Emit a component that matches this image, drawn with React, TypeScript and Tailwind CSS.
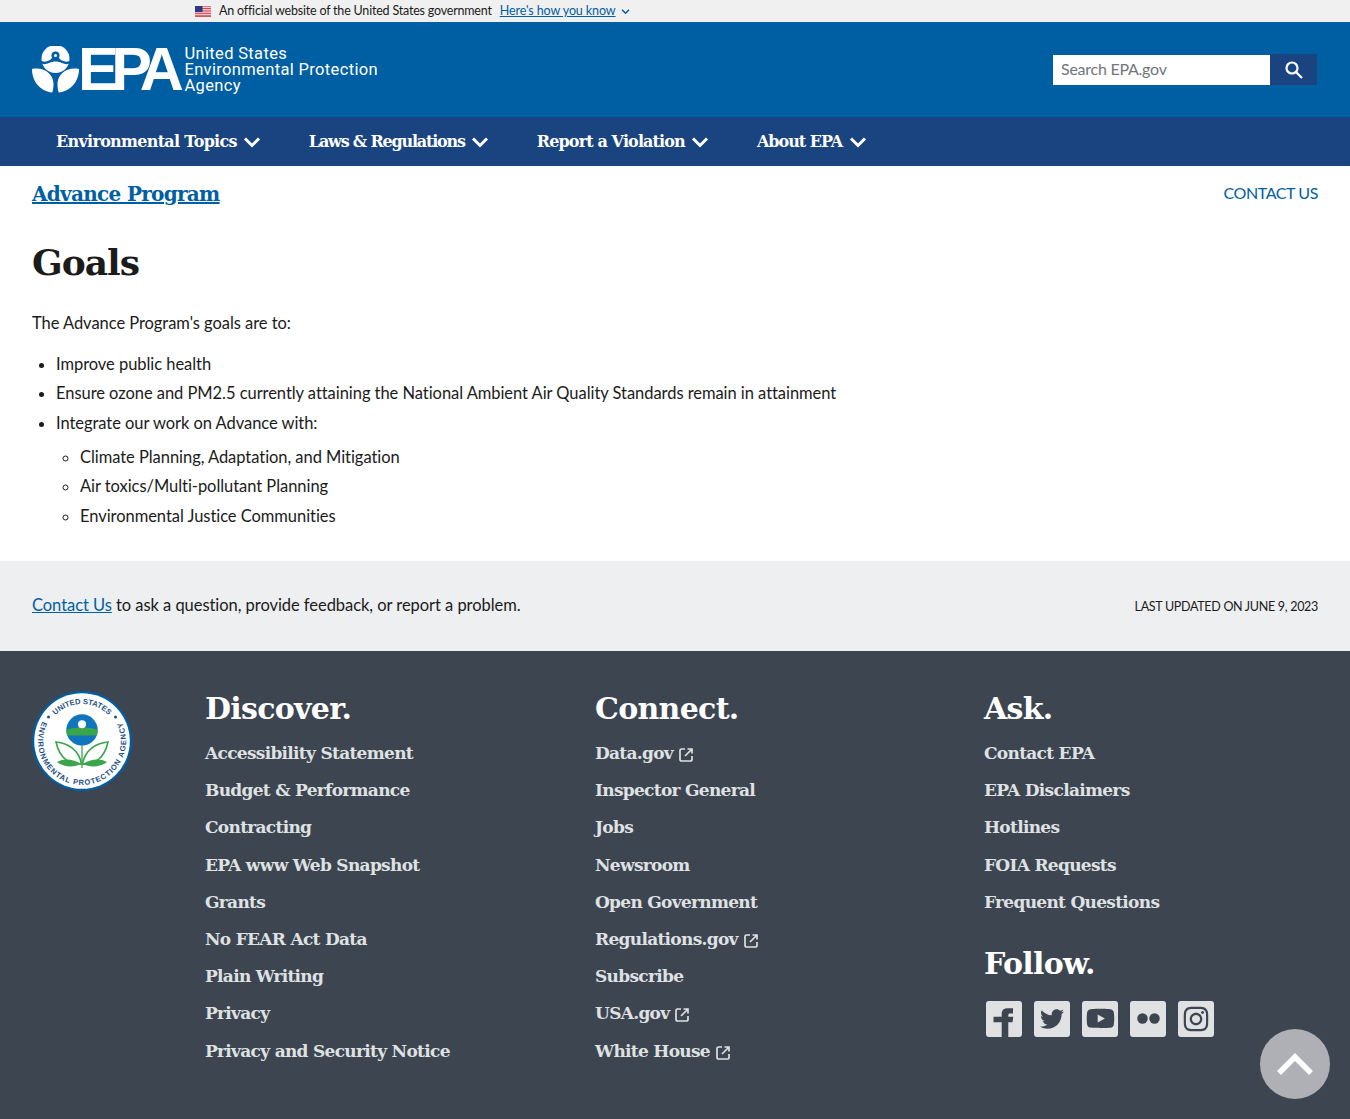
import { FaInstagram, FaTwitter, FaYoutube } from 'react-icons/fa';

const sans = "font-['Source_Sans_Pro','Lato','Noto_Sans',sans-serif]";
const serif = "font-['DejaVu_Serif',serif]";
const footerHeading = `text-[30px] leading-[36px] font-bold tracking-[-0.7px] text-white ${serif}`;

interface FooterLink {
  label: string;
  external?: boolean;
}

const discover: FooterLink[] = [
  { label: 'Accessibility Statement' },
  { label: 'Budget & Performance' },
  { label: 'Contracting' },
  { label: 'EPA www Web Snapshot' },
  { label: 'Grants' },
  { label: 'No FEAR Act Data' },
  { label: 'Plain Writing' },
  { label: 'Privacy' },
  { label: 'Privacy and Security Notice' },
];

const connect: FooterLink[] = [
  { label: 'Data.gov', external: true },
  { label: 'Inspector General' },
  { label: 'Jobs' },
  { label: 'Newsroom' },
  { label: 'Open Government' },
  { label: 'Regulations.gov', external: true },
  { label: 'Subscribe' },
  { label: 'USA.gov', external: true },
  { label: 'White House', external: true },
];

const ask: FooterLink[] = [
  { label: 'Contact EPA' },
  { label: 'EPA Disclaimers' },
  { label: 'Hotlines' },
  { label: 'FOIA Requests' },
  { label: 'Frequent Questions' },
];

const navItems = [
  { label: 'Environmental Topics', tracking: 'tracking-[-0.7px]' },
  { label: 'Laws & Regulations', tracking: 'tracking-[-1.2px]' },
  { label: 'Report a Violation', tracking: 'tracking-[-0.87px]' },
  { label: 'About EPA', tracking: 'tracking-[-1px]' },
];

function Flag() {
  return (
    <svg width="16" height="11" viewBox="0 0 16 11" className="shrink-0">
      <rect width="16" height="11" fill="#fff" />
      <path d="M0 .8h16M0 2.500h16M0 4.200h16M0 5.900h16M0 7.600h16M0 9.300h16M0 10.600h16" stroke="#c8313e" strokeWidth="0.9" />
      <rect width="7.500" height="6" fill="#2b3a7d" />
    </svg>
  );
}

function Chevron({ size = 18, width = 3 }: { size?: number; width?: number }) {
  return (
    <svg width={size} height={size} viewBox="0 0 18 18" fill="none" stroke="currentColor" strokeWidth={width}>
      <path d="M2 5.500 9 12.500 16 5.500" />
    </svg>
  );
}

function ExternalIcon() {
  return (
    <svg width="16" height="16" viewBox="0 0 16 16" fill="none" stroke="#dfe1e2" strokeWidth="1.700" className="ml-[5px] mt-[3px] shrink-0">
      <path d="M7 2H3.500A1.500 1.500 0 0 0 2 3.500v9A1.500 1.500 0 0 0 3.500 14h9a1.500 1.500 0 0 0 1.500-1.500V9" />
      <path d="M9.500 2H14v4.500M14 2 7 9" />
    </svg>
  );
}

function EpaMark() {
  return (
    <svg width="47" height="47" viewBox="0 0 47 47" className="shrink-0">
      <circle cx="23.500" cy="13" r="14" fill="#fff" />
      <circle cx="23.500" cy="9.500" r="4" fill="#005ea2" />
      <circle cx="23.500" cy="9.500" r="1.500" fill="#fff" />
      <path fill="#005ea2" d="M8 14.500c3 1.500 6 1.500 9 0 2-1 3-2.500 3.500-3h6c.5.500 1.500 2 3.500 3 3 1.500 6 1.500 9 0v2.500c-3 1.500-6 1.500-9 0-2.500-1-4-1.500-6.500-1.500s-4 .5-6.500 1.500c-3 1.500-6 1.500-9 0Z" />
      <path fill="#fff" d="M0 23c4-.8 8-.5 12 1 6 2.500 9.500 8 9.500 14 0 3-.4 6-1.200 8.500C9 45.500 0 36 0 23ZM47 23c-4-.8-8-.5-12 1-6 2.500-9.500 8-9.500 14 0 3 .4 6 1.200 8.500C38 45.500 47 36 47 23Z" />
    </svg>
  );
}

function Seal() {
  return (
    <svg width="100" height="100" viewBox="0 0 100 100" className="shrink-0">
      <defs>
        <path id="sealTop" d="M13 50a37 37 0 0 1 74 0" />
        <path id="sealBottom" d="M10.100 31.400A44 44 0 1 0 89.900 31.400" />
      </defs>
      <circle cx="50" cy="50" r="50" fill="#005ea2" />
      <circle cx="50" cy="50" r="47.800" fill="#fff" />
      <text fontSize="7.600" fontWeight="700" fill="#1d4f86" fontFamily="'Liberation Sans', sans-serif">
        <textPath href="#sealTop" startOffset="50%" textAnchor="middle">UNITED STATES</textPath>
      </text>
      <text fontSize="7.600" fontWeight="700" fill="#1d4f86" fontFamily="'Liberation Sans', sans-serif" letterSpacing="0.85">
        <textPath href="#sealBottom" startOffset="50%" textAnchor="middle">ENVIRONMENTAL PROTECTION AGENCY</textPath>
      </text>
      <circle cx="16.500" cy="26" r="1.500" fill="#1d4f86" />
      <circle cx="83.500" cy="26" r="1.500" fill="#1d4f86" />
      <circle cx="50" cy="39" r="15.700" fill="#0f75bc" />
      <path d="M34.300 39a15.700 15.700 0 0 0 1 5.500h29.400a15.700 15.700 0 0 0 1-5.500c-4-1.500-7-2.500-15.700-2.500s-11.700 1-15.700 2.500Z" fill="#3aa54a" />
      <circle cx="50" cy="33.300" r="4" fill="#fff" />
      <path d="M50 55v22" stroke="#3aa54a" strokeWidth="1.300" />
      <path d="M24 51c12 1 23 8 25.500 22-12 1-22-6-25.500-22Z" fill="none" stroke="#3aa54a" strokeWidth="1.600" />
      <path d="M76 51c-12 1-23 8-25.500 22 12 1 22-6 25.500-22Z" fill="none" stroke="#3aa54a" strokeWidth="1.600" />
      <path d="M25 71c7-4 17-3 24 2-7 4-18 3-24-2ZM75 71c-7-4-17-3-24 2 7 4 18 3 24-2Z" fill="#3aa54a" />
    </svg>
  );
}

function FooterList({ links }: { links: FooterLink[] }) {
  return (
    <ul className="flex flex-col gap-[12.200px]">
      {links.map((link) => (
        <li key={link.label} className={`flex h-[25px] items-center text-[17px] leading-[25px] font-bold tracking-[-0.7px] text-[#dfe1e2] ${serif}`}>
          {link.label}
          {link.external && <ExternalIcon />}
        </li>
      ))}
    </ul>
  );
}

function SocialIcon({ children }: { children: React.ReactNode }) {
  return (
    <div className="flex h-9 w-9 items-center justify-center overflow-hidden rounded-[3px] bg-[#dfe1e2] text-[#3d4551]">
      {children}
    </div>
  );
}

export default function App() {
  return (
    <div className={`relative min-h-[1119px] overflow-hidden bg-white text-[#1b1b1b] ${sans}`}>
      <div className="flex h-[22px] items-center bg-[#f0f0f0] pt-px pl-[195px] text-[12.500px]">
        <Flag />
        <span className="ml-2 tracking-[-0.2px]">An official website of the United States government</span>
        <span className="ml-2 tracking-[-0.1px] text-[#005ea2] underline">Here's how you know</span>
        <span className="ml-[5px] text-[#005ea2]">
          <Chevron size={9} width={3} />
        </span>
      </div>

      <header className="flex h-[95px] items-center justify-between bg-[#005ea2] pr-[33px] pl-8">
        <div className="flex items-center">
          <EpaMark />
          <span className="ml-[-1px] font-['Liberation_Sans',sans-serif] text-[61px] leading-none font-bold tracking-[-7.500px] text-white">EPA</span>
          <div className="ml-[8px] font-['Roboto',sans-serif] text-[16.500px] leading-[16px] tracking-[0.35px] text-white">
            <div>United States</div>
            <div>Environmental Protection</div>
            <div>Agency</div>
          </div>
        </div>
        <div className="flex h-[31px] items-end">
          <div className="flex h-[30px] w-[217px] items-center bg-white pb-[2px] pl-2 text-[16px] tracking-[-0.25px] text-[#71767a]">Search EPA.gov</div>
          <div className="flex h-[31px] w-[47px] items-center justify-center bg-[#1a4480]">
            <svg width="20" height="20" viewBox="0 0 20 20" fill="none" stroke="#fff" strokeWidth="2.200">
              <circle cx="8" cy="8" r="5.500" />
              <path d="m12 12 6 6" />
            </svg>
          </div>
        </div>
      </header>

      <nav className={`flex h-[49px] items-center gap-[47.500px] bg-[#1a4480] pl-14 text-[16px] font-bold text-white ${serif}`}>
        {navItems.map((item) => (
          <div key={item.label} className={`flex items-center gap-[6.500px] ${item.tracking}`}>
            {item.label}
            <Chevron size={18} width={3} />
          </div>
        ))}
      </nav>

      <main className="h-[395px] px-8">
        <div className="flex items-center justify-between pt-[13px]">
          <a className={`text-[20px] leading-[30px] font-bold tracking-[-0.7px] text-[#005ea2] underline ${serif}`}>Advance Program</a>
          <span className="-mt-[2px] text-[16px] tracking-[-0.4px] text-[#005ea2]">CONTACT US</span>
        </div>
        <h1 className={`mt-[27px] text-[36px] leading-[52px] font-bold tracking-[-1px] ${serif}`}>Goals</h1>
        <div className="mt-[21px] text-[16.500px] leading-[29.500px] tracking-[-0.05px]">
          <p>The Advance Program's goals are to:</p>
          <ul className="mt-[11px] list-disc pl-6">
            <li>Improve public health</li>
            <li>Ensure ozone and PM2.5 currently attaining the National Ambient Air Quality Standards remain in attainment</li>
            <li>
              Integrate our work on Advance with:
              <ul className="mt-[4.500px] list-[circle] pl-6">
                <li>Climate Planning, Adaptation, and Mitigation</li>
                <li>Air toxics/Multi-pollutant Planning</li>
                <li>Environmental Justice Communities</li>
              </ul>
            </li>
          </ul>
        </div>
      </main>

      <div className="flex h-[90px] items-center justify-between bg-[#edeff0] px-8">
        <p className="-mt-[2px] text-[16.500px] tracking-[-0.05px]">
          <a className="text-[#005ea2] underline">Contact Us</a> to ask a question, provide feedback, or report a problem.
        </p>
        <span className="mt-[2px] text-[12.500px] tracking-[-0.3px]">LAST UPDATED ON JUNE 9, 2023</span>
      </div>

      <footer className="flex h-[468px] bg-[#3d4551] pt-10 pl-8">
        <Seal />
        <div className="ml-[73px] grid flex-1 grid-cols-[390px_389px_1fr]">
          <div>
            <h2 className={footerHeading}>Discover.</h2>
            <div className="mt-[14px]">
              <FooterList links={discover} />
            </div>
          </div>
          <div>
            <h2 className={footerHeading}>Connect.</h2>
            <div className="mt-[14px]">
              <FooterList links={connect} />
            </div>
          </div>
          <div>
            <h2 className={footerHeading}>Ask.</h2>
            <div className="mt-[14px]">
              <FooterList links={ask} />
            </div>
            <h2 className={`mt-[31px] ${footerHeading}`}>Follow.</h2>
            <div className="mt-[19px] flex gap-3 pl-[2px]">
              <SocialIcon>
                <svg width="36" height="36" viewBox="0 0 36 36" fill="#3d4551">
                  <path d="M15.700 36V21.300H7.500V15.700H15.700V13C15.700 9 18 7.300 22 7.300H27V12.500H24C22.800 12.500 22.300 13 22.300 14.500V15.700H27.300L26.500 21.300H22.300V36Z" />
                </svg>
              </SocialIcon>
              <SocialIcon><FaTwitter size={24} /></SocialIcon>
              <SocialIcon><FaYoutube size={29} /></SocialIcon>
              <SocialIcon>
                <svg width="23" height="11" viewBox="0 0 23 11" fill="#3d4551">
                  <circle cx="5.500" cy="5.500" r="5.200" />
                  <circle cx="17.500" cy="5.500" r="5.200" />
                </svg>
              </SocialIcon>
              <SocialIcon><FaInstagram size={28} /></SocialIcon>
            </div>
          </div>
        </div>
      </footer>

      <div className="absolute top-[1029px] left-[1260px] flex h-[70px] w-[70px] items-center justify-center rounded-full bg-[#aeb0b5]">
        <svg width="36" height="24" viewBox="0 0 36 24" fill="none" stroke="#fff" strokeWidth="5.500">
          <path d="M2 21 18 5l16 16" />
        </svg>
      </div>
    </div>
  );
}
